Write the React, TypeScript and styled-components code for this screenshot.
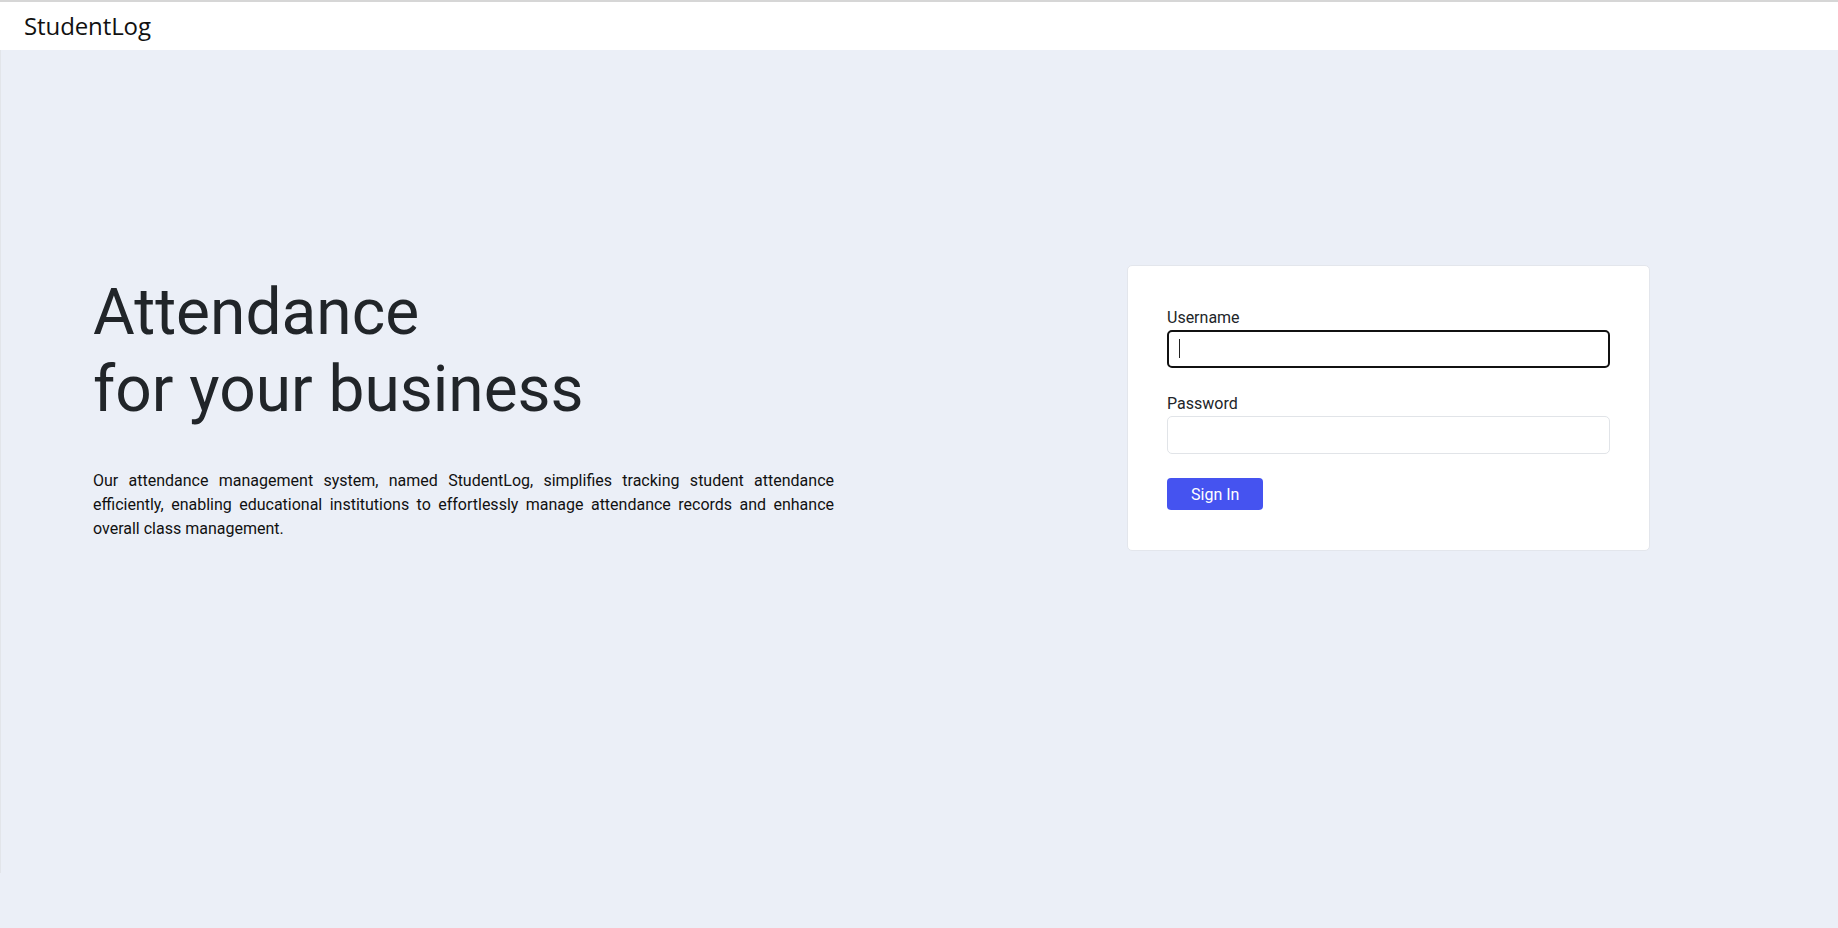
import React from "react";
import styled, { createGlobalStyle } from "styled-components";

const GlobalStyle = createGlobalStyle`
  html, body {
    margin: 0;
    padding: 0;
    background: #ebeff7;
    font-family: Roboto, "Liberation Sans", sans-serif;
    color: #212529;
  }
  * { box-sizing: border-box; }
`;

const Page = styled.div`
  min-height: 928px;
  background: #ebeff7;
`;

const Header = styled.header`
  height: 50px;
  background: #ffffff;
  border-top: 2px solid #d6d6d6;
  display: flex;
  align-items: center;
  padding: 0 24px;
`;

const Brand = styled.div`
  font-family: "Open Sans", "Noto Sans", sans-serif;
  font-size: 24px;
  color: #111;
  letter-spacing: -0.1px;
  margin-top: -2px;
`;

const Main = styled.main`
  height: 823px;
  border-left: 1px solid #e2e5ea;
`;

const Hero = styled.section`
  height: 716px;
  display: flex;
  align-items: center;
  justify-content: space-between;
  padding: 0 188px 0 92px;
`;

const Intro = styled.div`
  width: 741px;
  display: flex;
  flex-direction: column;
  gap: 40px;
`;

const Title = styled.h1`
  margin: 0;
  font-size: 64px;
  font-weight: 400;
  line-height: 1.2;
  color: #212529;
`;

const Lead = styled.p`
  margin: 0;
  font-size: 16px;
  line-height: 24px;
  text-align: justify;
  color: #111;
`;

const Card = styled.form`
  width: 523px;
  background: #fff;
  border: 1px solid #e3e6ec;
  border-radius: 5px;
  padding: 40px 39px 40px;
  display: flex;
  flex-direction: column;
  gap: 24px;
`;

const Field = styled.div`
  display: flex;
  flex-direction: column;
`;

const Label = styled.label`
  font-size: 16px;
  line-height: 24px;
  color: #212529;
`;

const InputWrap = styled.div`
  position: relative;
`;

const Input = styled.input<{ $focused?: boolean }>`
  width: 100%;
  height: 38px;
  border-radius: 5px;
  border: ${(p) => (p.$focused ? "2px solid #111" : "1px solid #e1e4e8")};
  background: #fff;
  font-size: 16px;
  font-family: inherit;
  padding: 0 12px;
  outline: none;
  caret-color: transparent;
`;

const Caret = styled.span`
  position: absolute;
  left: 12px;
  top: 9px;
  width: 1px;
  height: 19px;
  background: #222;
`;

const Button = styled.button`
  align-self: flex-start;
  height: 32px;
  padding: 0 24px;
  border: none;
  border-radius: 4px;
  background: #4553f0;
  color: #fff;
  font-family: inherit;
  font-size: 16px;
  cursor: pointer;
`;

export default function App() {
  return (
    <>
      <GlobalStyle />
      <Page>
        <Header>
          <Brand>StudentLog</Brand>
        </Header>
        <Main>
          <Hero>
            <Intro>
              <Title>
                Attendance
                <br />
                for your business
              </Title>
              <Lead>
                Our attendance management system, named StudentLog, simplifies tracking student
                attendance efficiently, enabling educational institutions to effortlessly manage
                attendance records and enhance overall class management.
              </Lead>
            </Intro>
            <Card onSubmit={(e) => e.preventDefault()}>
              <Field>
                <Label htmlFor="username">Username</Label>
                <InputWrap>
                  <Input id="username" type="text" $focused />
                  <Caret />
                </InputWrap>
              </Field>
              <Field>
                <Label htmlFor="password">Password</Label>
                <Input id="password" type="password" />
              </Field>
              <Button type="submit">Sign In</Button>
            </Card>
          </Hero>
        </Main>
      </Page>
    </>
  );
}
